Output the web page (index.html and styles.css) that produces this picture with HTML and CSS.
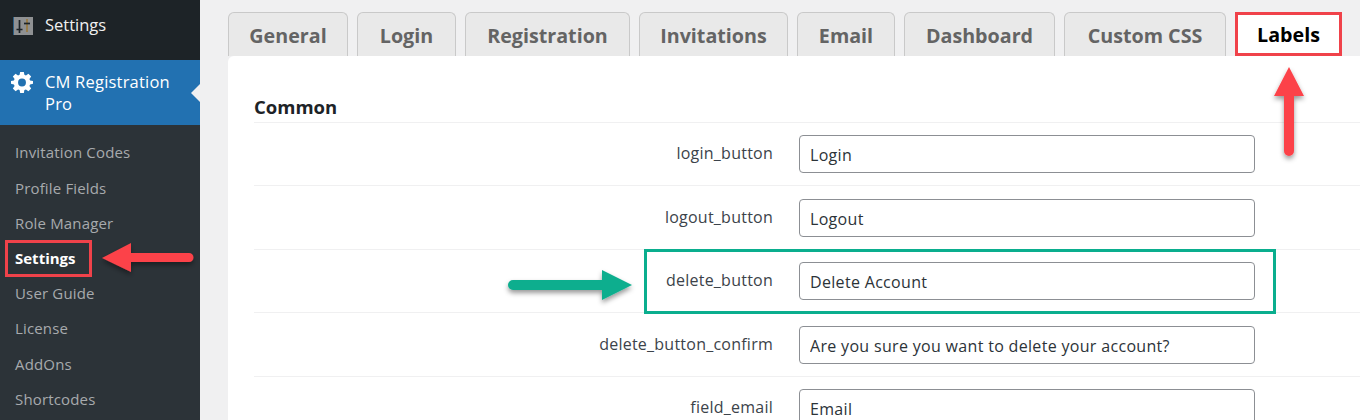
FILE: index.html
```html
<!DOCTYPE html>
<html lang="en">
<head>
<meta charset="utf-8">
<title>CM Registration Pro Settings</title>
<link rel="stylesheet" href="styles.css">
</head>
<body>
<div class="page">
  <aside class="sidebar">
    <div class="top-item">
      <svg class="icon-sliders" viewBox="0 0 20 18" width="20" height="18" aria-hidden="true">
        <rect width="20" height="18" fill="#8f9193"/>
        <rect x="0" y="0" width="1" height="18" fill="#2b5f86"/>
        <path d="M6.500 3v13M3.500 12.500h6" stroke="#1d2327" stroke-width="1.700" fill="none"/>
        <path d="M14 2v13" stroke="#9a7a3f" stroke-width="1.700" fill="none"/>
        <path d="M11 6.500h6" stroke="#1d2327" stroke-width="1.700" fill="none"/>
      </svg>
      <span>Settings</span>
    </div>
    <div class="current-item">
      <svg class="icon-gear" viewBox="0 0 24 24" width="24" height="24" aria-hidden="true">
        <path fill="#fff" fill-rule="evenodd" d="M10 1h4l.6 3.200 1.700.7L19 3l3 3-1.900 2.700.7 1.700L24 11v3l-3.200.6-.7 1.700L22 19l-3 3-2.700-1.900-1.700.7L14 24h-4l-.6-3.200-1.700-.7L5 22l-3-3 1.900-2.700-.7-1.700L0 14v-3l3.200-.6.7-1.700L2 6l3-3 2.700 1.900 1.700-.7zM12 8.200a4.300 4.300 0 1 0 0 8.600 4.300 4.300 0 0 0 0-8.600z"/>
      </svg>
      <span class="current-label">CM Registration Pro</span>
    </div>
    <nav class="submenu">
      <a>Invitation Codes</a>
      <a>Profile Fields</a>
      <a>Role Manager</a>
      <a class="active">Settings</a>
      <a>User Guide</a>
      <a>License</a>
      <a>AddOns</a>
      <a>Shortcodes</a>
    </nav>
  </aside>

  <main class="main">
    <div class="tabs">
      <a class="tab tab-general">General</a>
      <a class="tab tab-login">Login</a>
      <a class="tab tab-registration">Registration</a>
      <a class="tab tab-invitations">Invitations</a>
      <a class="tab tab-email">Email</a>
      <a class="tab tab-dashboard">Dashboard</a>
      <a class="tab tab-css">Custom CSS</a>
      <a class="tab tab-labels">Labels</a>
    </div>
    <section class="panel">
      <h2 class="section-title">Common</h2>
      <div class="row"><label>login_button</label><input value="Login"></div>
      <div class="row"><label>logout_button</label><input value="Logout"></div>
      <div class="row"><label>delete_button</label><input value="Delete Account"></div>
      <div class="row"><label>delete_button_confirm</label><input value="Are you sure you want to delete your account?"></div>
      <div class="row"><label>field_email</label><input value="Email"></div>
    </section>
  </main>
</div>

<div class="mark-settings"></div>
<div class="mark-delete"></div>
<svg class="arrows" viewBox="0 0 1360 420" width="1360" height="420" aria-hidden="true">
  <defs>
    <filter id="soft" x="-20%" y="-20%" width="140%" height="140%">
      <feDropShadow dx="0" dy="3" stdDeviation="2.500" flood-color="#000" flood-opacity=".4"/>
    </filter>
  </defs>
  <g filter="url(#soft)">
    <path fill="#fc4349" d="M102 258l29-15v10h58a4.500 4.500 0 0 1 0 9h-58v10z"/>
    <path fill="#fc4349" d="M1289 67l15 29h-10v55a5 5 0 0 1-10 0V96h-10z"/>
    <path fill="#0aae8e" d="M632 285l-30-15v10h-89a5 5 0 0 0 0 10h89v10z"/>
  </g>
</svg>
</body>
</html>
```
FILE: styles.css
```css
* { box-sizing: border-box; }
html, body { margin: 0; height: 420px; overflow: hidden; }
body {
  position: relative;
  background: #f0f0f1;
  font-family: "Open Sans", "Noto Sans", sans-serif;
  color: #3c434a;
}
.page { display: flex; height: 420px; }

.sidebar {
  width: 200px;
  flex: none;
  background: #2c3338;
  display: flex;
  flex-direction: column;
}
.top-item {
  height: 60px;
  padding: 0 0 12px 13px;
  background: #1d2327;
  color: #f0f0f1;
  font-size: 16.500px;
  display: flex;
  align-items: center;
  gap: 12px;
}
.icon-sliders { flex: none; margin-top: 4px; }
.current-item {
  position: relative;
  height: 65px;
  padding: 11px 10px 0 11px;
  background: #2271b1;
  color: #fff;
  font-size: 16.500px;
  letter-spacing: .2px;
  line-height: 22px;
  display: flex;
  gap: 12px;
}
.current-item::after {
  content: "";
  position: absolute;
  right: 0;
  top: 24px;
  border: 9px solid transparent;
  border-right-color: #f0f0f1;
  border-left-width: 0;
}
.icon-gear { width: 22px; height: 22px; flex: none; }
.current-label { width: 150px; }
.submenu {
  display: flex;
  flex-direction: column;
  padding-top: 10.400px;
}
.submenu a {
  height: 35.200px;
  line-height: 35.200px;
  padding-left: 15px;
  font-size: 15px;
  letter-spacing: .16px;
  color: #a7aaad;
  white-space: nowrap;
}
.submenu a.active { color: #fff; font-weight: 700; letter-spacing: 0; }

.main { flex: 1; min-width: 0; padding-left: 28px; }
.tabs { display: flex; gap: 9px; padding-top: 12px; height: 56px; }
.tab {
  height: 44px;
  border: 1px solid #c9c9c9;
  border-bottom: 0;
  border-radius: 6px 6px 0 0;
  background: #e9e9e9;
  color: #646464;
  font-size: 19.700px;
  font-weight: 700;
  line-height: 46px;
  text-align: center;
  white-space: nowrap;
}
.tab-general { width: 120px; }
.tab-login { width: 99px; }
.tab-registration { width: 165px; }
.tab-invitations { width: 149px; }
.tab-email { width: 98px; }
.tab-dashboard { width: 151px; }
.tab-css { width: 162px; }
.tab-labels {
  width: 107px;
  border: 3px solid #f0424a;
  border-radius: 0;
  background: #fff;
  color: #000;
  line-height: 40px;
}

.panel {
  height: 364px;
  padding: 0 0 0 26px;
  background: #fff;
  border-top-left-radius: 6px;
}
.section-title {
  height: 66.500px;
  margin: 0;
  padding-top: 37px;
  border-bottom: 1px solid #f0f0f1;
  font-size: 18.500px;
  line-height: 28px;
  font-weight: 700;
  color: #1d2327;
}
.row {
  height: 63.500px;
  display: flex;
  align-items: flex-start;
  padding-top: 12.500px;
  border-bottom: 1px solid #f0f0f1;
}
.row label {
  width: 519px;
  flex: none;
  text-align: right;
  font-size: 16px;
  letter-spacing: .24px;
  line-height: 37px;
  color: #3c434a;
}
.row input {
  width: 456px;
  height: 38px;
  margin-left: 26px;
  padding: 2px 10px 0;
  border: 1px solid #8c8f94;
  border-radius: 4px;
  background: #fff;
  color: #2c3338;
  font: 16px "Open Sans", "Noto Sans", sans-serif;
  letter-spacing: .32px;
}

.mark-settings {
  position: absolute;
  left: 5px;
  top: 240px;
  width: 87px;
  height: 37px;
  border: 3px solid #f0424a;
}
.mark-delete {
  position: absolute;
  left: 644px;
  top: 249px;
  width: 632px;
  height: 65px;
  border: 3px solid #0aae8e;
}
.arrows { position: absolute; left: 0; top: 0; pointer-events: none; }
```
